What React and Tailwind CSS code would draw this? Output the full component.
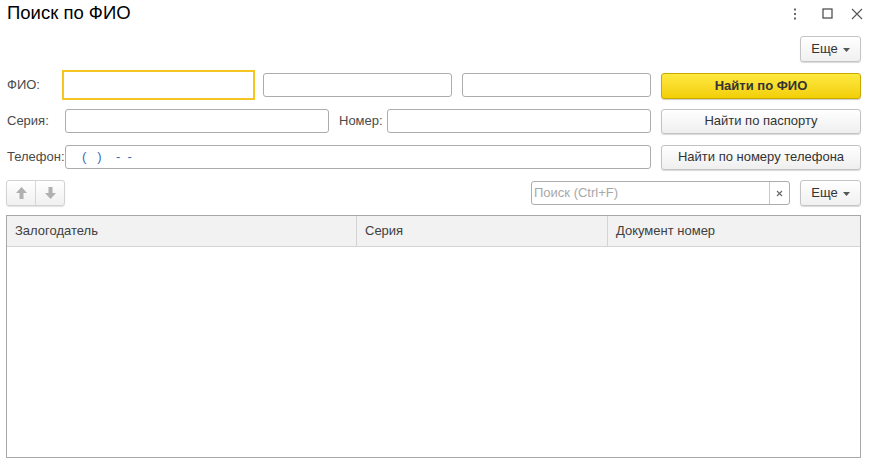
import React from "react";

const font = { fontFamily: '"Liberation Sans", Arial, sans-serif' };

function Caret() {
  return (
    <svg width="7" height="4" viewBox="0 0 7 4" className="ml-[5px] mt-[2px]">
      <path d="M0 0 H7 L3.5 4 Z" fill="#555" />
    </svg>
  );
}

function MoreButton() {
  return (
    <button className="flex items-center justify-center w-[61px] h-[26px] rounded-[3px] border border-[#c4c4c4] bg-gradient-to-b from-white to-[#f0f0f0] shadow-[0_1px_1px_rgba(0,0,0,0.15)] text-[13px] text-[#333]">
      <span>Еще</span>
      <Caret />
    </button>
  );
}

function Input({ className = "", children }) {
  return (
    <div
      className={
        "h-[24px] rounded-[3px] border border-[#acacac] bg-white flex items-center text-[13px] " +
        className
      }
    >
      {children}
    </div>
  );
}

function GrayButton({ children }) {
  return (
    <button className="w-[200px] h-[25px] rounded-[3px] border border-[#c2c2c2] bg-gradient-to-b from-white to-[#efefef] shadow-[0_1px_1px_rgba(0,0,0,0.15)] text-[13px] text-[#333] flex items-center justify-center">
      {children}
    </button>
  );
}

export default function App() {
  return (
    <div style={font} className="w-[871px] h-[466px] bg-white relative overflow-hidden text-[#404040]">
      {/* Title bar */}
      <div className="flex items-center h-[30px] pl-[7px] pr-[6px]">
        <div className="text-[18.5px] text-black leading-none -mt-[3px]">Поиск по ФИО</div>
        <div className="ml-auto flex items-center -mt-[3px]">
          <svg width="4" height="12" viewBox="0 0 4 12" className="mr-[25px]">
            <rect x="1" y="0.5" width="2" height="2" fill="#666" />
            <rect x="1" y="5" width="2" height="2" fill="#666" />
            <rect x="1" y="9.5" width="2" height="2" fill="#666" />
          </svg>
          <svg width="11" height="11" viewBox="0 0 11 11" className="mr-[18px]">
            <rect x="1" y="1" width="9" height="9" fill="none" stroke="#444" strokeWidth="1.2" />
          </svg>
          <svg width="12" height="12" viewBox="0 0 12 12" className="mr-[2px]">
            <path d="M1 1 L11 11 M11 1 L1 11" stroke="#555" strokeWidth="1.1" />
          </svg>
        </div>
      </div>

      {/* Top Еще */}
      <div className="flex justify-end pr-[10px] mt-[6px]">
        <MoreButton />
      </div>

      {/* Form rows */}
      <div className="pl-[7px] mt-[11px] flex flex-col">
        {/* Row 1 */}
        <div className="flex items-center h-[24px]">
          <div className="w-[58px] text-[13px] text-[#4a4a4a]">ФИО:</div>
          <div className="w-[193px] h-[30px] -mx-[3px] border-2 border-[#f5c623] bg-white shrink-0" />
          <div className="w-[11px]" />
          <Input className="w-[189px]" />
          <div className="w-[10px]" />
          <Input className="w-[189px]" />
          <div className="w-[10px]" />
          <button className="w-[200px] h-[26px] mt-[1px] rounded-[3px] border border-[#c9a800] bg-gradient-to-b from-[#ffe93d] to-[#f2cf00] shadow-[0_1px_1px_rgba(0,0,0,0.2)] text-[13px] font-bold text-[#333] flex items-center justify-center">
            Найти по ФИО
          </button>
        </div>

        {/* Row 2 */}
        <div className="flex items-center h-[24px] mt-[12px]">
          <div className="w-[58px] text-[13px] text-[#4a4a4a]">Серия:</div>
          <Input className="w-[264px]" />
          <div className="w-[10px]" />
          <div className="w-[48px] text-[13px] text-[#4a4a4a]">Номер:</div>
          <Input className="w-[264px]" />
          <div className="w-[10px]" />
          <GrayButton>Найти по паспорту</GrayButton>
        </div>

        {/* Row 3 */}
        <div className="flex items-center h-[24px] mt-[12px]">
          <div className="w-[58px] text-[13px] text-[#4a4a4a]">Телефон:</div>
          <Input className="w-[586px]">
            <span className="pl-[16px] text-[#3b6bb0] whitespace-pre">{"(   )    -  -"}</span>
          </Input>
          <div className="w-[10px]" />
          <GrayButton>Найти по номеру телефона</GrayButton>
        </div>
      </div>

      {/* Toolbar */}
      <div className="flex items-center pl-[6px] pr-[10px] mt-[11px] h-[26px]">
        <div className="flex h-[26px] w-[59px] rounded-[3px] border border-[#d2d2d2] bg-gradient-to-b from-white to-[#f0f0f0] shadow-[0_1px_1px_rgba(0,0,0,0.12)]">
          <div className="flex-1 flex items-center justify-center border-r border-[#d6d6d6]">
            <svg width="11" height="12" viewBox="0 0 11 12">
              <path d="M5.5 0 L11 6 H7.5 V12 H3.5 V6 H0 Z" fill="#b0b0b0" />
            </svg>
          </div>
          <div className="flex-1 flex items-center justify-center">
            <svg width="11" height="12" viewBox="0 0 11 12">
              <path d="M5.5 12 L11 6 H7.5 V0 H3.5 V6 H0 Z" fill="#b0b0b0" />
            </svg>
          </div>
        </div>
        <div className="ml-auto flex h-[24px] w-[259px] rounded-[3px] border border-[#acacac] bg-white">
          <div className="flex-1 flex items-center pl-[2px] text-[13px] text-[#a8a8a8]">Поиск (Ctrl+F)</div>
          <div className="w-[20px] border-l border-[#c8c8c8] flex items-center justify-center">
            <svg width="7" height="7" viewBox="0 0 7 7">
              <path d="M1 1 L6 6 M6 1 L1 6" stroke="#666" strokeWidth="1.1" />
            </svg>
          </div>
        </div>
        <div className="w-[10px]" />
        <MoreButton />
      </div>

      {/* Table */}
      <div className="mx-[6px] mt-[9px] w-[855px] h-[243px] border border-[#a8a8a8] flex flex-col">
        <div className="flex h-[31px] bg-[#f2f2f2] border-b border-[#d4d4d4] text-[13px] text-[#404040]">
          <div className="w-[350px] border-r border-[#d4d4d4] flex items-center pl-[8px]">Залогодатель</div>
          <div className="w-[251px] border-r border-[#d4d4d4] flex items-center pl-[8px]">Серия</div>
          <div className="flex-1 flex items-center pl-[8px]">Документ номер</div>
        </div>
        <div className="flex-1 bg-white" />
      </div>
    </div>
  );
}
